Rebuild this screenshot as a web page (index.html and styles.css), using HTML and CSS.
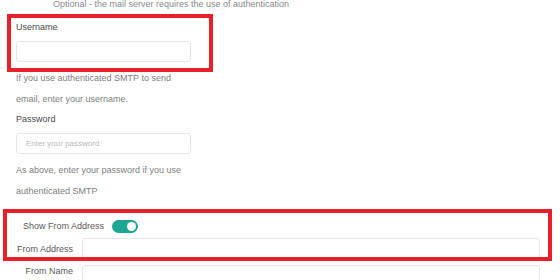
FILE: index.html
```html
<!DOCTYPE html>
<html lang="en">
<head>
    <meta charset="UTF-8">
    <title>SMTP Settings</title>
    <link rel="stylesheet" href="styles.css">
</head>
<body>
    <div class="page">
        <div class="note">Optional - the mail server requires the use of authentication</div>

        <div class="group group-user">
            <label class="label">Username</label>
            <input class="input" type="text">
            <p class="help">If you use authenticated SMTP to send<br>email, enter your username.</p>
        </div>

        <div class="group">
            <label class="label">Password</label>
            <input class="input" type="password" placeholder="Enter your password">
            <p class="help">As above, enter your password if you use<br>authenticated SMTP</p>
        </div>

        <div class="from">
            <div class="switch-row">
                <span class="switch-label">Show From Address</span>
                <span class="switch on"><span class="knob"></span></span>
            </div>
            <div class="row">
                <label class="row-label">From Address</label>
                <input class="input wide" type="text">
            </div>
            <div class="row row-name">
                <label class="row-label">From Name</label>
                <input class="input wide" type="text">
            </div>
        </div>

        <!-- highlight boxes -->
        <div class="mark mark-user"></div>
        <div class="mark mark-from"></div>
    </div>
</body>
</html>
```

FILE: styles.css
```css
* {
    margin: 0;
    padding: 0;
    box-sizing: border-box;
}

body {
    font-family: "Liberation Sans", Arial, sans-serif;
    font-size: 9px;
    color: #555;
    background: #fff;
}

.page {
    position: relative;
    width: 560px;
    height: 280px;
    overflow: hidden;
}

.note {
    color: #8a8a8a;
    line-height: 12px;
    margin-top: -2px;
    padding-left: 53px;
}

.group {
    padding-left: 16px;
}

.group-user {
    padding-top: 11px;
}

.label {
    display: block;
    color: #4a4a4a;
    line-height: 12px;
    margin-bottom: 8px;
}

.input {
    display: block;
    width: 175px;
    height: 21px;
    border: 1px solid #e6e6e6;
    border-radius: 3px;
    background: #fff;
    font-family: inherit;
    font-size: 8px;
    padding: 0 9px;
    outline: none;
}

.input::placeholder {
    color: #b8b8b8;
}

.help {
    color: #808080;
    line-height: 20.5px;
    margin: 6px 0 4px;
}

.from {
    margin-top: 17px;
}

.switch-row {
    display: flex;
    align-items: center;
    height: 16px;
    padding-left: 23px;
    margin-bottom: 4px;
}

.switch-label {
    color: #5a5a5a;
}

.switch {
    position: relative;
    width: 26px;
    height: 13px;
    border-radius: 7px;
    background: #e0e0e0;
    margin-left: 8px;
}

.switch.on {
    background: #1fa692;
}

.knob {
    position: absolute;
    top: 2px;
    left: 2px;
    width: 9px;
    height: 9px;
    border-radius: 50%;
    background: #fff;
}

.switch.on .knob {
    left: 15px;
}

.row {
    display: flex;
    align-items: center;
    margin-bottom: 6px;
}

.row-label {
    width: 73px;
    text-align: right;
    color: #5a5a5a;
    line-height: 12px;
}

.input.wide {
    width: 458px;
    margin-left: 9px;
}

.row-name {
    align-items: flex-start;
}

.mark {
    position: absolute;
    border: 4px solid #e8202a;
}

.mark-user {
    left: 7px;
    top: 14px;
    width: 206px;
    height: 58px;
}

.mark-from {
    left: 3px;
    top: 209px;
    width: 549px;
    height: 52px;
}
```
